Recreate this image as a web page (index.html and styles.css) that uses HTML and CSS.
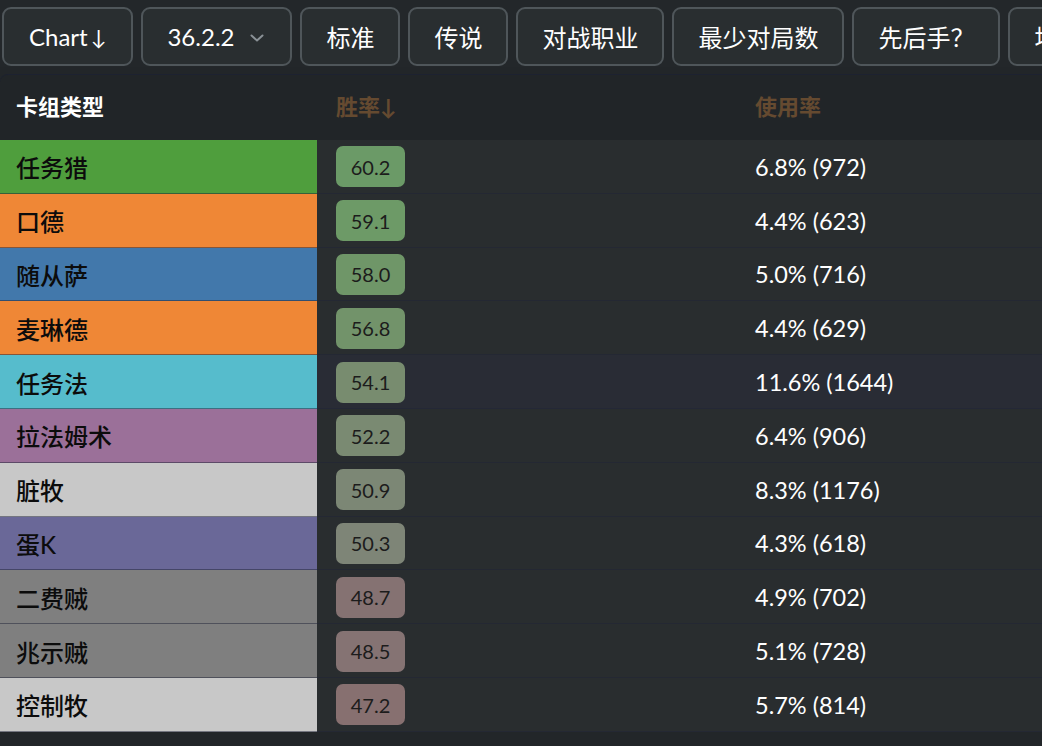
FILE: index.html
```html
<!DOCTYPE html>
<html lang="zh">
<head>
<meta charset="utf-8">
<title>卡组数据</title>
<link rel="stylesheet" href="styles.css">
</head>
<body>
<div class="toolbar">
  <button class="btn btn-chart">Chart<span class="arrow">↓</span></button>
  <button class="btn btn-select">36.2.2<svg class="chev" viewBox="0 0 14 8" width="14" height="8"><path d="M1.5 1.5 L7 6.5 L12.5 1.5" fill="none" stroke="#8a9196" stroke-width="2" stroke-linecap="round" stroke-linejoin="round"/></svg></button>
  <button class="btn">标准</button>
  <button class="btn">传说</button>
  <button class="btn">对战职业</button>
  <button class="btn">最少对局数</button>
  <button class="btn">先后手？</button>
  <button class="btn">地区</button>
</div>
<div class="table">
  <div class="row head">
    <div class="cell name">卡组类型</div>
    <div class="cell wr sort">胜率↓</div>
    <div class="cell use sort">使用率</div>
  </div>
  <div class="row">
    <div class="cell name c-hunter">任务猎</div>
    <div class="cell wr"><span class="badge" style="background:#6b9a67">60.2</span></div>
    <div class="cell use">6.8% (972)</div>
  </div>
  <div class="row">
    <div class="cell name c-druid">口德</div>
    <div class="cell wr"><span class="badge" style="background:#6d9a67">59.1</span></div>
    <div class="cell use">4.4% (623)</div>
  </div>
  <div class="row">
    <div class="cell name c-shaman">随从萨</div>
    <div class="cell wr"><span class="badge" style="background:#6f9668">58.0</span></div>
    <div class="cell use">5.0% (716)</div>
  </div>
  <div class="row">
    <div class="cell name c-druid">麦琳德</div>
    <div class="cell wr"><span class="badge" style="background:#72936a">56.8</span></div>
    <div class="cell use">4.4% (629)</div>
  </div>
  <div class="row hover">
    <div class="cell name c-mage">任务法</div>
    <div class="cell wr"><span class="badge" style="background:#788c6f">54.1</span></div>
    <div class="cell use">11.6% (1644)</div>
  </div>
  <div class="row">
    <div class="cell name c-warlock">拉法姆术</div>
    <div class="cell wr"><span class="badge" style="background:#7a8a72">52.2</span></div>
    <div class="cell use">6.4% (906)</div>
  </div>
  <div class="row">
    <div class="cell name c-priest">脏牧</div>
    <div class="cell wr"><span class="badge" style="background:#7c8775">50.9</span></div>
    <div class="cell use">8.3% (1176)</div>
  </div>
  <div class="row">
    <div class="cell name c-dk">蛋K</div>
    <div class="cell wr"><span class="badge" style="background:#7e8577">50.3</span></div>
    <div class="cell use">4.3% (618)</div>
  </div>
  <div class="row">
    <div class="cell name c-rogue">二费贼</div>
    <div class="cell wr"><span class="badge" style="background:#857272">48.7</span></div>
    <div class="cell use">4.9% (702)</div>
  </div>
  <div class="row">
    <div class="cell name c-rogue">兆示贼</div>
    <div class="cell wr"><span class="badge" style="background:#857373">48.5</span></div>
    <div class="cell use">5.1% (728)</div>
  </div>
  <div class="row">
    <div class="cell name c-priest">控制牧</div>
    <div class="cell wr"><span class="badge" style="background:#877070">47.2</span></div>
    <div class="cell use">5.7% (814)</div>
  </div>
</div>
</body>
</html>
```
FILE: styles.css
```css
html, body {
  margin: 0;
  padding: 0;
}
body {
  background: #222629;
  font-family: Lato, "Noto Sans CJK SC", sans-serif;
  color: #fff;
  overflow: hidden;
  width: 1042px;
  height: 746px;
}
.toolbar {
  display: flex;
  gap: 8px;
  padding: 7px 0 0 2px;
  height: 67px;
  box-sizing: border-box;
  white-space: nowrap;
  background: #23272a;
}
.btn {
  flex-shrink: 0;
  height: 59px;
  box-sizing: border-box;
  border: 2px solid #4f565a;
  border-radius: 9px;
  background: #292e30;
  color: #fff;
  font-family: Lato, "Noto Sans CJK SC", sans-serif;
  font-size: 24px;
  padding: 0 24px;
  display: flex;
  align-items: center;
  justify-content: center;
}
.btn-chart {
  padding: 0 25px;
}
.arrow {
  margin-left: 3px;
  font-size: 21px;
}
.btn-select {
  padding-right: 26px;
}
.chev {
  margin-left: 16px;
  margin-top: 2px;
}
.table {
  margin-top: 7px;
  background: #212528;
  border-top: 1px solid #1d2230;
  border-top-left-radius: 8px;
  width: 1300px;
}
.row {
  display: grid;
  grid-template-columns: 317px 419px 1fr;
  height: 53.8px;
  background: #292d2f;
}
.row .cell {
  box-shadow: inset 0 -1px 0 rgba(32, 35, 56, 0.5);
}
.row.head {
  height: 65px;
  background: transparent;
}
.row.head .cell {
  box-shadow: none;
  padding-bottom: 5px;
}
.row.hover {
  background: #292c35;
}
.cell {
  display: flex;
  align-items: center;
  padding-left: 19px;
  font-size: 23.5px;
}
.cell.name {
  padding-left: 16px;
  font-size: 24px;
  font-weight: 500;
  color: #0c0c0c;
}
.head .cell {
  font-size: 22px;
  font-weight: 700;
}
.head .cell.name {
  color: #fff;
  font-weight: 700;
}
.head .sort {
  color: #654a30;
}
.badge {
  width: 69px;
  height: 41px;
  border-radius: 7px;
  display: flex;
  align-items: center;
  justify-content: center;
  font-size: 20px;
  color: #1c1c1c;
}
.c-hunter { background: #4f9e3d; }
.c-druid { background: #ef8736; }
.c-shaman { background: #4278ab; }
.c-mage { background: #56bccc; }
.c-warlock { background: #9b7099; }
.c-priest { background: #c8c8c8; }
.c-dk { background: #6a6898; }
.c-rogue { background: #7f7f7f; }
```
